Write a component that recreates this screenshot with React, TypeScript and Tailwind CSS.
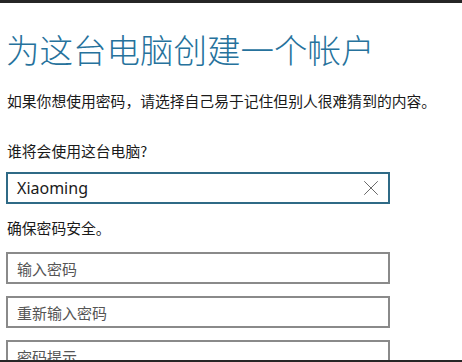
import { X } from 'lucide-react'

const font = { fontFamily: '"Noto Sans CJK SC", "Noto Sans", sans-serif' }

const Field = ({ placeholder }: { placeholder: string }) => (
  <div className="h-[32px] w-[384px] border-2 border-[#8a8a8a] bg-white flex items-center pl-[9px]">
    <span className="text-[15px] text-[#555] leading-none">{placeholder}</span>
  </div>
)

const App = () => {
  return (
    <div className="w-[462px] h-[362px] bg-white overflow-hidden flex flex-col" style={font}>
      <div className="h-[3px] bg-[#262626] shrink-0" />
      <div className="flex-1 overflow-hidden pl-[6px]">
        <h1 className="mt-[26px] text-[33.5px] leading-[40px] font-light text-[#26729c] whitespace-nowrap">
          为这台电脑创建一个帐户
        </h1>
        <p className="mt-[22px] text-[14.8px] leading-[20px] text-[#1a1a1a] whitespace-nowrap pl-[1px]">
          如果你想使用密码，请选择自己易于记住但别人很难猜到的内容。
        </p>
        <p className="mt-[30px] text-[14.8px] leading-[20px] text-[#1a1a1a] pl-[1px]">谁将会使用这台电脑?</p>

        <div className="mt-[11px] h-[32px] w-[384px] border-2 border-[#2f6a86] bg-white flex items-center pl-[9px] pr-[4px]">
          <span className="flex-1 text-[16px] text-[#1a1a1a] leading-none" style={{ fontFamily: '"Noto Sans", sans-serif' }}>
            Xiaoming
          </span>
          <X size={26} strokeWidth={0.9} className="text-[#666]" />
        </div>

        <p className="mt-[14px] text-[14.8px] leading-[20px] text-[#1a1a1a] pl-[1px]">确保密码安全。</p>

        <div className="mt-[14px] flex flex-col gap-[12px]">
          <Field placeholder="输入密码" />
          <Field placeholder="重新输入密码" />
          <Field placeholder="密码提示" />
        </div>
      </div>
      <div className="h-[2px] bg-[#262626] shrink-0" />
    </div>
  )
}

export default App
